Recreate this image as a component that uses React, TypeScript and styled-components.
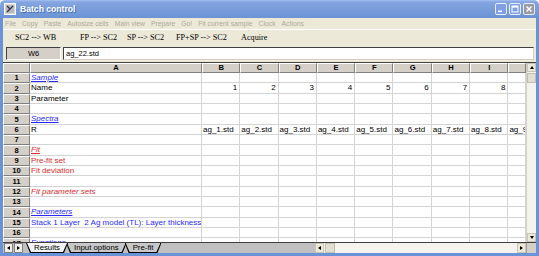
import React from 'react';
import styled, { createGlobalStyle } from 'styled-components';

const Global = createGlobalStyle`
  html, body { margin: 0; padding: 0; width: 539px; height: 256px; overflow: hidden; background: #fff; }
  * { box-sizing: border-box; }
`;

const Window = styled.div`
  width: 539px;
  height: 256px;
  display: flex;
  flex-direction: column;
  font-family: "Liberation Sans", Arial, sans-serif;
`;

const TitleBar = styled.div`
  height: 18px;
  flex: none;
  display: flex;
  align-items: center;
  padding: 0 4px 0 4px;
  background: linear-gradient(#a6bff0 0px, #84a5e0 2px, #7a9edc 8px, #7198d8 14px, #6b92d4 18px);
  border-radius: 5px 5px 0 0;
`;

const Title = styled.span`
  flex: 1;
  margin-left: 4px;
  color: #fff;
  font-weight: bold;
  font-size: 8.6px;
  text-shadow: 1px 1px 0 #4a6fb0;
`;

const WinButton = styled.div<{ $close?: boolean }>`
  width: 12px;
  height: 12px;
  margin-left: 2px;
  border: 1px solid #e8eefc;
  border-radius: 2px;
  background: ${(p) => (p.$close ? '#9a9aa6' : '#7f9fe2')};
  display: flex;
  align-items: center;
  justify-content: center;
`;

const Frame = styled.div`
  flex: 1;
  display: flex;
  flex-direction: column;
  background: #6a92d6;
  padding: 0 3px 3px 3px;
  min-height: 0;
`;

const Body = styled.div`
  flex: 1;
  display: flex;
  flex-direction: column;
  background: #ece9d8;
  min-height: 0;
`;

const MenuBar = styled.div`
  height: 12px;
  flex: none;
  display: flex;
  align-items: center;
  gap: 6px;
  padding-left: 2px;
  border-bottom: 1px solid #fff;
`;

const MenuItem = styled.span`
  font-size: 6.8px;
  color: #aca899;
  white-space: nowrap;
`;

const Toolbar = styled.div`
  height: 14px;
  flex: none;
  display: flex;
  align-items: center;
  padding-left: 12px;
`;

const ToolButton = styled.span<{ $w: number }>`
  width: ${(p) => p.$w}px;
  font-family: "Liberation Serif", "Times New Roman", serif;
  font-size: 8.2px;
  color: #000;
  white-space: nowrap;
`;

const EditRow = styled.div`
  height: 18px;
  flex: none;
  display: flex;
  align-items: center;
  gap: 2px;
  padding: 0 2px 0 3px;
`;

const CellRef = styled.div`
  width: 55px;
  height: 13px;
  background: #d4d0c8;
  border-top: 1px solid #404040;
  border-left: 1px solid #404040;
  border-right: 1px solid #fff;
  border-bottom: 1px solid #fff;
  font-size: 7.5px;
  display: flex;
  align-items: center;
  justify-content: center;
`;

const FormulaInput = styled.div`
  flex: 1;
  height: 13px;
  background: #fff;
  border-top: 1px solid #404040;
  border-left: 1px solid #404040;
  border-right: 1px solid #d4d0c8;
  border-bottom: 1px solid #d4d0c8;
  font-size: 7.5px;
  padding-left: 2px;
  display: flex;
  align-items: center;
`;

const GridArea = styled.div`
  flex: 1;
  min-height: 0;
  display: flex;
  border-top: 1px solid #404040;
`;

const Sheet = styled.div`
  flex: 1;
  min-width: 0;
  overflow: hidden;
  display: grid;
  grid-template-columns: 27px 172px repeat(8, 38.3px) 1fr;
  grid-template-rows: 10px;
  grid-auto-rows: 10.33px;
  background: #fff;
  font-size: 8px;
`;

const HeaderCell = styled.div`
  background: #d4d0c8;
  border-top: 1px solid #fff;
  border-left: 1px solid #fff;
  border-right: 1px solid #808080;
  border-bottom: 1px solid #808080;
  font-weight: bold;
  font-size: 7.6px;
  display: flex;
  align-items: center;
  justify-content: center;
  overflow: hidden;
  line-height: 1;
`;

const Cell = styled.div<{ $color?: string; $italic?: boolean; $underline?: boolean; $right?: boolean }>`
  border-right: 1px solid #d4d4d4;
  border-bottom: 1px solid #d4d4d4;
  color: ${(p) => p.$color || '#000'};
  font-style: ${(p) => (p.$italic ? 'italic' : 'normal')};
  text-decoration: ${(p) => (p.$underline ? 'underline' : 'none')};
  text-align: ${(p) => (p.$right ? 'right' : 'left')};
  padding: 0 2px 0 1px;
  white-space: pre;
  overflow: hidden;
  line-height: 10px;
`;

const VScroll = styled.div`
  width: 10px;
  flex: none;
  display: flex;
  flex-direction: column;
  background: #f4f3ee;
  border-left: 1px solid #d4d0c8;
`;

const ScrollButton = styled.div<{ $h?: number }>`
  flex: none;
  height: ${(p) => p.$h || 9}px;
  background: #ece9d8;
  border: 1px solid #c8c5b8;
  display: flex;
  align-items: center;
  justify-content: center;
`;

const Thumb = styled.div<{ $v?: boolean }>`
  flex: none;
  ${(p) => (p.$v ? 'height: 10px; margin-top: 1px;' : 'width: 10px; margin-left: 1px;')}
  background: #e2dfd2;
  border: 1px solid #c2bfb2;
`;

const Track = styled.div`
  flex: 1;
`;

const Arrow = styled.span<{ $dir: 'up' | 'down' | 'left' | 'right' }>`
  width: 0;
  height: 0;
  border-style: solid;
  ${(p) =>
    p.$dir === 'up'
      ? 'border-width: 0 2.5px 3px 2.5px; border-color: transparent transparent #000 transparent;'
      : p.$dir === 'down'
      ? 'border-width: 3px 2.5px 0 2.5px; border-color: #000 transparent transparent transparent;'
      : p.$dir === 'left'
      ? 'border-width: 2.5px 3px 2.5px 0; border-color: transparent #000 transparent transparent;'
      : 'border-width: 2.5px 0 2.5px 3px; border-color: transparent transparent transparent #000;'}
`;

const BottomBar = styled.div`
  height: 11px;
  flex: none;
  display: flex;
  background: #c0c0c0;
  border-top: 1px solid #404040;
`;

const TabStrip = styled.div`
  width: 312px;
  flex: none;
  display: flex;
  align-items: stretch;
  padding-left: 1px;
`;

const NavButton = styled.div`
  width: 9px;
  flex: none;
  margin-right: 1px;
  background: #f0efe8;
  border: 1px solid #808080;
  display: flex;
  align-items: center;
  justify-content: center;
`;

const TabShape = styled.div<{ $active?: boolean }>`
  position: relative;
  margin-left: ${(p) => (p.$active ? '2px' : '-2px')};
  z-index: ${(p) => (p.$active ? 2 : 1)};
  background: #000;
  clip-path: polygon(0 0, 100% 0, calc(100% - 4px) 100%, 4px 100%);
  padding: 0 1px 1px 1px;
  display: flex;
`;

const TabFace = styled.div<{ $active?: boolean }>`
  background: ${(p) => (p.$active ? '#f4f4f4' : '#c8c8c8')};
  clip-path: polygon(0 0, 100% 0, calc(100% - 4px) 100%, 4px 100%);
  padding: 0 7px;
  font-size: 7.8px;
  line-height: 9px;
  white-space: nowrap;
`;

const HScroll = styled.div`
  flex: 1;
  display: flex;
  background: #f4f3ee;
`;

const HButton = styled.div`
  width: 9px;
  flex: none;
  background: #ece9d8;
  border: 1px solid #c8c5b8;
  display: flex;
  align-items: center;
  justify-content: center;
`;

const Corner = styled.div`
  width: 10px;
  flex: none;
  background: #d4d0c8;
  border-left: 1px solid #a0a0a0;
`;

type CellDef = { t: string; color?: string; italic?: boolean; underline?: boolean };

const BLUE = '#2a2aff';
const RED = '#e02a2a';

const rowsA: Record<number, CellDef> = {
  1: { t: 'Sample', color: BLUE, italic: true, underline: true },
  2: { t: 'Name' },
  3: { t: 'Parameter' },
  5: { t: 'Spectra', color: BLUE, italic: true, underline: true },
  6: { t: 'R' },
  8: { t: 'Fit', color: RED, italic: true, underline: true },
  9: { t: 'Pre-fit set', color: RED },
  10: { t: 'Fit deviation', color: RED },
  12: { t: 'Fit parameter sets', color: RED, italic: true },
  14: { t: 'Parameters', color: BLUE, italic: true, underline: true },
  15: { t: 'Stack 1 Layer  2 Ag model (TL): Layer thickness', color: BLUE },
  17: { t: 'Functions', color: BLUE, italic: true, underline: true },
};

const cols = ['A', 'B', 'C', 'D', 'E', 'F', 'G', 'H', 'I', ''];

function cellContent(row: number, col: number): { t: string; right?: boolean } {
  if (row === 2 && col >= 1 && col <= 8) return { t: String(col), right: true };
  if (row === 6 && col >= 1 && col <= 8) return { t: `ag_${col}.std` };
  if (row === 6 && col === 9) return { t: 'ag_9' };
  return { t: '' };
}

const menus = ['File', 'Copy', 'Paste', 'Autosize cells', 'Main view', 'Prepare', 'Go!', 'Fit current sample', 'Clock', 'Actions'];
const tools: [string, number][] = [
  ['SC2 --> WB', 65],
  ['FP --> SC2', 47],
  ['SP --> SC2', 49],
  ['FP+SP --> SC2', 65],
  ['Acquire', 40],
];

const AppIcon = () => (
  <svg width="12" height="12" viewBox="0 0 12 12">
    <rect x="0.5" y="0.5" width="11" height="11" fill="#d8d8d8" stroke="#ffffff" />
    <rect x="2" y="2" width="8" height="8" fill="#b8b8c0" />
    <path d="M3 9 L9 3 M3 3 L6 6" stroke="#303040" strokeWidth="1.2" fill="none" />
  </svg>
);

export default function App() {
  const rows = Array.from({ length: 17 }, (_, i) => i + 1);
  return (
    <Window>
      <Global />
      <TitleBar>
        <AppIcon />
        <Title>Batch control</Title>
        <WinButton>
          <svg width="10" height="10" viewBox="0 0 10 10">
            <rect x="2" y="6.5" width="4" height="1.6" fill="#fff" />
          </svg>
        </WinButton>
        <WinButton>
          <svg width="10" height="10" viewBox="0 0 10 10">
            <rect x="2" y="2" width="6" height="6" fill="none" stroke="#fff" strokeWidth="1" />
            <rect x="2" y="2" width="6" height="1.6" fill="#fff" />
          </svg>
        </WinButton>
        <WinButton $close>
          <svg width="10" height="10" viewBox="0 0 10 10">
            <path d="M2.5 2.5 L7.5 7.5 M7.5 2.5 L2.5 7.5" stroke="#fff" strokeWidth="1.5" />
          </svg>
        </WinButton>
      </TitleBar>
      <Frame>
        <Body>
          <MenuBar>
            {menus.map((m) => (
              <MenuItem key={m}>{m}</MenuItem>
            ))}
          </MenuBar>
          <Toolbar>
            {tools.map(([t, w]) => (
              <ToolButton key={t} $w={w}>
                {t}
              </ToolButton>
            ))}
          </Toolbar>
          <EditRow>
            <CellRef>W6</CellRef>
            <FormulaInput>ag_22.std</FormulaInput>
          </EditRow>
          <GridArea>
            <Sheet>
              <HeaderCell />
              {cols.map((c, i) => (
                <HeaderCell key={'h' + i}>{c}</HeaderCell>
              ))}
              {rows.map((r) => (
                <React.Fragment key={r}>
                  <HeaderCell>{r}</HeaderCell>
                  {cols.map((_, ci) => {
                    if (ci === 0) {
                      const a = rowsA[r];
                      return (
                        <Cell key={ci} $color={a?.color} $italic={a?.italic} $underline={a?.underline}>
                          {a?.t || ''}
                        </Cell>
                      );
                    }
                    const c = cellContent(r, ci);
                    return (
                      <Cell key={ci} $right={c.right}>
                        {c.t}
                      </Cell>
                    );
                  })}
                </React.Fragment>
              ))}
            </Sheet>
            <VScroll>
              <ScrollButton>
                <Arrow $dir="up" />
              </ScrollButton>
              <Thumb $v />
              <Track />
              <ScrollButton>
                <Arrow $dir="down" />
              </ScrollButton>
            </VScroll>
          </GridArea>
          <BottomBar>
            <TabStrip>
              <NavButton>
                <Arrow $dir="left" />
              </NavButton>
              <NavButton>
                <Arrow $dir="right" />
              </NavButton>
              <TabShape $active>
                <TabFace $active>Results</TabFace>
              </TabShape>
              <TabShape>
                <TabFace>Input options</TabFace>
              </TabShape>
              <TabShape>
                <TabFace>Pre-fit</TabFace>
              </TabShape>
            </TabStrip>
            <HScroll>
              <HButton>
                <Arrow $dir="left" />
              </HButton>
              <Thumb />
              <Track />
              <HButton>
                <Arrow $dir="right" />
              </HButton>
            </HScroll>
            <Corner />
          </BottomBar>
        </Body>
      </Frame>
    </Window>
  );
}
